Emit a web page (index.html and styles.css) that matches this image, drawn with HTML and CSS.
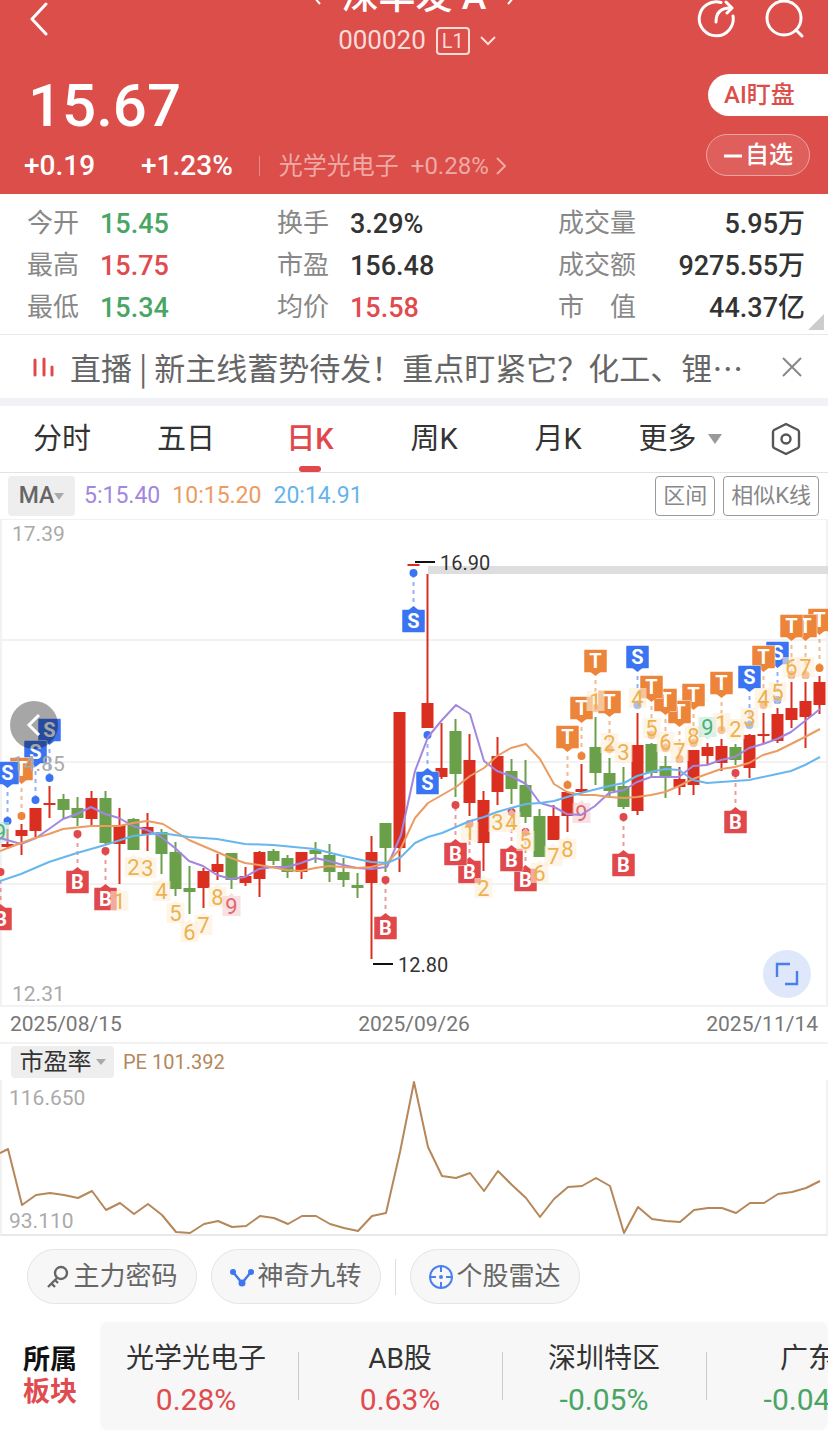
FILE: index.html
```html
<!DOCTYPE html>
<html lang="zh-CN">
<head>
<meta charset="utf-8">
<meta name="viewport" content="width=device-width, initial-scale=1">
<title>深华发A 000020</title>
<link rel="stylesheet" href="styles.css">
</head>
<body>
<header class="header">
  <div class="topbar">
    <button class="icon-btn back" aria-label="返回">
      <svg width="20" height="34" viewBox="0 0 20 34"><path d="M17 2 3 17l14 15" fill="none" stroke="#fff" stroke-width="3" stroke-linecap="round" stroke-linejoin="round"/></svg>
    </button>
    <div class="stock">
      <div class="stock-name">
        <svg width="10" height="18" viewBox="0 0 10 18"><path d="M8 2 2 9l6 7" fill="none" stroke="#fff" stroke-width="2"/></svg>
        <h1>深华发 A</h1>
        <svg width="10" height="18" viewBox="0 0 10 18"><path d="m2 2 6 7-6 7" fill="none" stroke="#fff" stroke-width="2"/></svg>
      </div>
      <button class="stock-code">000020 <span class="level">L1</span>
        <svg width="16" height="10" viewBox="0 0 16 10"><path d="m1 1 7 7 7-7" fill="none" stroke="#fbdcd9" stroke-width="2"/></svg>
      </button>
    </div>
    <div class="tools">
      <button class="icon-btn" aria-label="分享">
        <svg width="42" height="42" viewBox="0 0 42 42" fill="none" stroke="#fff" stroke-width="3" stroke-linecap="round" stroke-linejoin="round"><path d="M25 4.500A17 17 0 1 0 37 18"/><path d="M20 24c0-9 4-14 14-14"/><path d="m30 4 6 6-5 5"/></svg>
      </button>
      <button class="icon-btn" aria-label="搜索">
        <svg width="42" height="42" viewBox="0 0 42 42" fill="none" stroke="#fff" stroke-width="3" stroke-linecap="round"><circle cx="20" cy="20" r="17"/><path d="m32 32 6 6"/></svg>
      </button>
    </div>
  </div>
  <div class="summary">
    <div class="summary-main">
      <div class="price">15.67</div>
      <div class="changes">
        <span class="change-abs">+0.19</span>
        <span class="change-pct">+1.23%</span>
        <a class="industry" href="#">光学光电子 <span class="industry-pct">+0.28%</span>
          <svg width="12" height="20" viewBox="0 0 12 20"><path d="m2 2 8 8-8 8" fill="none" stroke="#efaaa6" stroke-width="2"/></svg>
        </a>
      </div>
    </div>
    <div class="summary-actions">
      <button class="watch">AI盯盘</button>
      <button class="favorite"><svg width="20" height="20" viewBox="0 0 20 20"><path d="M1 11h18" stroke="#fff" stroke-width="3"/></svg>自选</button>
    </div>
  </div>
</header>

<main>
  <section class="quotes" aria-label="行情">
    <div class="quote"><span class="label">今开</span><span class="value down">15.45</span></div>
    <div class="quote"><span class="label">换手</span><span class="value">3.29%</span></div>
    <div class="quote wide"><span class="label">成交量</span><span class="value">5.95万</span></div>
    <div class="quote"><span class="label">最高</span><span class="value up">15.75</span></div>
    <div class="quote"><span class="label">市盈</span><span class="value">156.48</span></div>
    <div class="quote wide"><span class="label">成交额</span><span class="value">9275.55万</span></div>
    <div class="quote"><span class="label">最低</span><span class="value down">15.34</span></div>
    <div class="quote"><span class="label">均价</span><span class="value up">15.58</span></div>
    <div class="quote wide"><span class="label">市　值</span><span class="value">44.37亿</span></div>
    <span class="corner"></span>
  </section>

  <section class="news">
    <svg class="news-icon" width="22" height="20" viewBox="0 0 22 20" stroke="#e0484c" stroke-width="3" stroke-linecap="round"><path d="M3 3v15M12 2v16M20 10v8"/></svg>
    <a class="news-text" href="#">直播 | 新主线蓄势待发！重点盯紧它？化工、锂电池</a>
    <button class="icon-btn" aria-label="关闭">
      <svg width="20" height="20" viewBox="0 0 20 20"><path d="m1 1 18 18M19 1 1 19" stroke="#888" stroke-width="2"/></svg>
    </button>
  </section>

  <nav class="tabs">
    <button class="tab">分时</button>
    <button class="tab">五日</button>
    <button class="tab active">日K</button>
    <button class="tab">周K</button>
    <button class="tab">月K</button>
    <button class="tab more">更多<svg width="14" height="10" viewBox="0 0 14 10"><path d="M0 0h14L7 10z" fill="#999"/></svg></button>
    <button class="tab" aria-label="设置">
      <svg width="32" height="34" viewBox="0 0 32 34" fill="none" stroke="#555" stroke-width="2.400" stroke-linejoin="round"><path d="M16 2 28 8q1 1 1 2v14q0 1-1 2L16 32 4 26q-1-1-1-2V10q0-1 1-2z"/><circle cx="16" cy="17" r="4.500"/></svg>
    </button>
  </nav>

  <div class="ma-bar">
    <button class="select-chip ma-chip">MA<svg width="10" height="7" viewBox="0 0 10 7"><path d="M0 0h10L5 7z" fill="#aaa"/></svg></button>
    <span class="ma5">5:15.40</span>
    <span class="ma10">10:15.20</span>
    <span class="ma20">20:14.91</span>
    <div class="ma-actions">
      <button class="outline-btn">区间</button>
      <button class="outline-btn">相似K线</button>
    </div>
  </div>

  <section class="chart">
    <svg id="kline" class="plot" viewBox="0 519 828 488" role="img" aria-label="日K线图"></svg>
    <button class="round prev" aria-label="向前">
      <svg width="16" height="24" viewBox="0 0 16 24"><path d="M13 2 3 12l10 10" fill="none" stroke="#fff" stroke-width="3"/></svg>
    </button>
    <button class="round expand" aria-label="全屏">
      <svg width="24" height="24" viewBox="0 0 24 24"><path d="M2 15V2h13M22 9v13H10" fill="none" stroke="#4a7ee8" stroke-width="2.400"/></svg>
    </button>
  </section>
  <div class="dates"><span>2025/08/15</span><span>2025/09/26</span><span>2025/11/14</span></div>

  <section class="pe">
    <div class="pe-head">
      <button class="select-chip pe-chip">市盈率<svg width="10" height="6" viewBox="0 0 10 6"><path d="M0 0h10L5 6z" fill="#aaa"/></svg></button>
      <span class="pe-value">PE 101.392</span>
    </div>
    <svg id="peline" class="plot" viewBox="0 1080 828 156" role="img" aria-label="市盈率走势"></svg>
  </section>

  <div class="shortcuts">
    <button class="pill">
      <svg width="24" height="26" viewBox="0 0 24 26" fill="none" stroke="#666" stroke-width="2.400"><circle cx="15" cy="9" r="6"/><path d="M11 14 2 23M5 19l4 4M9 16l3 3"/></svg>主力密码</button>
    <button class="pill">
      <svg width="24" height="26" viewBox="0 0 24 26"><path d="m3 8 9 11 9-11" fill="none" stroke="#3f76f0" stroke-width="2.400"/><g fill="#3f76f0"><circle cx="3" cy="8" r="3"/><circle cx="21" cy="8" r="3"/><circle cx="12" cy="19" r="3.500"/></g></svg>神奇九转</button>
    <span class="pill-divider"></span>
    <button class="pill">
      <svg width="24" height="26" viewBox="0 0 24 26" fill="none" stroke="#4a80ee" stroke-width="2"><circle cx="12" cy="13" r="11"/><path d="M12 2v6M12 18v6M1 13h6M17 13h6"/><circle cx="12" cy="13" r="2" fill="#4a80ee" stroke="none"/></svg>个股雷达</button>
  </div>

  <section class="sectors">
    <h2 class="sectors-title">所属<span class="up">板块</span></h2>
    <div class="sector-list">
      <a class="sector" href="#">光学光电子<span class="up">0.28%</span></a>
      <a class="sector" href="#">AB股<span class="up">0.63%</span></a>
      <a class="sector" href="#">深圳特区<span class="down">-0.05%</span></a>
      <a class="sector" href="#">广东<span class="down">-0.04%</span></a>
    </div>
  </section>
</main>
<script src="chart.js"></script>
</body>
</html>
```

FILE: styles.css
```css
* { box-sizing: border-box; }

body {
  margin: 0;
  background: #fff;
  color: #333;
  font-family: Roboto, "Noto Sans CJK SC", sans-serif;
  line-height: 1.2;
  overflow-x: hidden;
}

button {
  margin: 0;
  padding: 0;
  border: 0;
  background: none;
  color: inherit;
  font: inherit;
}

a { color: inherit; text-decoration: none; }
svg { display: block; flex: none; }

.up { color: #df4b4e; }
.down { color: #48a564; }

/* Header */
.header {
  background: #db4e49;
  color: #fff;
  overflow: hidden;
}
.topbar {
  display: grid;
  grid-template-columns: 1fr auto 1fr;
  height: 62px;
}
.icon-btn { display: flex; align-items: center; }
.back { height: 38px; padding-left: 29px; justify-self: start; }
.stock {
  display: flex;
  flex-direction: column;
  align-items: center;
  margin-top: -28px;
}
.stock-name { display: flex; align-items: center; gap: 20px; height: 50px; }
.stock-name h1 {
  margin: 0;
  font-size: 37px;
  font-weight: 500;
  line-height: 50px;
  white-space: nowrap;
}
.stock-code {
  display: flex;
  align-items: center;
  gap: 10px;
  height: 38px;
  padding-left: 6px;
  font-size: 26px;
  color: #fbdcd9;
}
.level {
  height: 28px;
  padding: 0 4px;
  border: 2px solid #fbdcd9;
  border-radius: 4px;
  font-size: 20px;
  line-height: 24px;
}
.tools {
  display: flex;
  justify-content: flex-end;
  gap: 26px;
  height: 38px;
  padding-right: 22px;
}
.summary { display: flex; justify-content: space-between; height: 132px; }
.price {
  padding-left: 28px;
  font-size: 60px;
  font-weight: 500;
  line-height: 88px;
}
.changes {
  display: flex;
  align-items: center;
  height: 32px;
  padding-left: 24px;
  font-size: 28px;
  font-weight: 500;
}
.change-pct { margin-left: 46px; }
.industry {
  display: flex;
  align-items: center;
  margin-left: 26px;
  padding-left: 19px;
  border-left: 1px solid #e88a86;
  height: 20px;
  color: #efaaa6;
  font-size: 24px;
  font-weight: 400;
  white-space: nowrap;
}
.industry-pct { margin: 0 6px 0 12px; }
.summary-actions {
  display: flex;
  flex-direction: column;
  align-items: flex-end;
  gap: 18px;
  padding-top: 12px;
}
.watch {
  width: 120px;
  height: 42px;
  padding-left: 16px;
  border-radius: 21px 0 0 21px;
  background: #fff;
  color: #db4e49;
  font-size: 24px;
  font-weight: 500;
  text-align: left;
}
.favorite {
  display: flex;
  align-items: center;
  justify-content: center;
  gap: 2px;
  width: 104px;
  height: 42px;
  margin-right: 18px;
  border: 1px solid #eda5a2;
  border-radius: 21px;
  background: #de5f5b;
  font-size: 24px;
  font-weight: 500;
}

/* Quote table */
.quotes {
  position: relative;
  display: grid;
  grid-template-columns: 250fr 281fr 247fr;
  padding: 9px 23px 5px 27px;
  border-bottom: 1px solid #e8e8e8;
}
.quote {
  display: flex;
  align-items: center;
  height: 42px;
  font-size: 26px;
  white-space: nowrap;
}
.quote .label { width: 73px; color: #888; }
.quote .value { font-size: 27px; font-weight: 500; }
.wide { justify-content: space-between; }
.wide .label { width: auto; }
.corner {
  position: absolute;
  right: 4px;
  bottom: 4px;
  width: 16px;
  height: 16px;
  background: #ccc;
  clip-path: polygon(100% 0, 100% 100%, 0 100%);
}

/* News strip */
.news {
  display: flex;
  align-items: center;
  height: 71px;
  padding: 0 26px 0 32px;
  border-bottom: 8px solid #f1f2f7;
}
.news-text {
  flex: 1;
  min-width: 0;
  margin: 0 36px 0 16px;
  overflow: hidden;
  color: #666;
  font-family: "Noto Sans CJK SC", sans-serif;
  font-size: 31px;
  line-height: 44px;
  text-overflow: ellipsis;
  white-space: nowrap;
}

/* Period tabs */
.tabs {
  display: grid;
  grid-template-columns: repeat(5, 124fr) 124fr 84fr;
  height: 67px;
  border-bottom: 1px solid #e2e2e2;
}
.tab {
  position: relative;
  display: flex;
  align-items: center;
  justify-content: center;
  font-size: 29px;
}
.more { gap: 11px; padding-right: 4px; }
.active { color: #e0484c; font-weight: 500; }
.active::after {
  content: "";
  position: absolute;
  bottom: 0;
  width: 22px;
  height: 6px;
  border-radius: 3px;
  background: #e0484c;
}

/* Moving-average bar */
.ma-bar {
  display: flex;
  align-items: center;
  height: 46px;
  padding: 0 9px 0 8px;
  font-size: 23px;
  white-space: nowrap;
}
.select-chip {
  display: flex;
  align-items: center;
  justify-content: center;
  border-radius: 4px;
  background: #eee;
}
.ma-chip { width: 67px; height: 40px; color: #666; font-weight: 500; }
.ma5 { margin-left: 9px; color: #a286e0; }
.ma10 { margin-left: 12px; color: #eb9c63; }
.ma20 { margin-left: 12px; color: #67b4ea; }
.ma-actions { display: flex; gap: 8px; margin-left: auto; }
.outline-btn {
  height: 40px;
  padding: 0 7px;
  border: 1px solid #999;
  border-radius: 4px;
  color: #888;
  font-size: 22px;
}

/* Charts */
.chart { position: relative; }
.plot { width: 100%; height: auto; overflow: hidden; }
.round {
  position: absolute;
  display: flex;
  align-items: center;
  justify-content: center;
  width: 48px;
  height: 48px;
  border-radius: 50%;
}
.prev { left: 10px; top: 182px; background: rgba(0, 0, 0, .35); }
.expand { right: 17px; bottom: 9px; background: #dfe8fb; }
.axis { fill: #aaa; font-size: 21px; }
.note { fill: #333; font-size: 20px; }
.flag-text { fill: #fff; font-size: 20px; font-weight: 700; text-anchor: middle; }
.count-text { font-size: 22px; text-anchor: middle; }
.dates {
  display: flex;
  align-items: center;
  justify-content: space-between;
  height: 35px;
  padding: 0 10px;
  color: #777;
  font-size: 21px;
}
.pe { border-top: 2px solid #f2f2f2; }
.pe-head { display: flex; align-items: center; height: 36px; padding-left: 11px; }
.pe-chip { gap: 4px; width: 103px; height: 32px; font-size: 24px; }
.pe-value { margin-left: 9px; color: #b5875a; font-size: 20px; }

/* Shortcuts */
.shortcuts {
  display: flex;
  align-items: center;
  gap: 14px;
  padding: 13px 27px 18px;
}
.pill {
  display: flex;
  align-items: center;
  justify-content: center;
  gap: 3px;
  width: 170px;
  height: 55px;
  border: 1px solid #e4e4e4;
  border-radius: 28px;
  background: #f7f7f7;
  color: #666;
  font-size: 26px;
  white-space: nowrap;
}
.pill-divider { width: 1px; height: 36px; background: #ddd; }

/* Sectors */
.sectors { display: flex; align-items: center; padding-bottom: 13px; }
.sectors-title {
  display: flex;
  flex: 0 0 100px;
  flex-direction: column;
  margin: 0;
  padding-left: 23px;
  color: #111;
  font-size: 27px;
  font-weight: 700;
  line-height: 32px;
}
.sector-list {
  display: flex;
  flex: 1;
  min-width: 0;
  height: 108px;
  overflow: hidden;
  border-radius: 8px;
  background: #f7f7f7;
}
.sector {
  position: relative;
  display: flex;
  flex: 0 0 204px;
  flex-direction: column;
  align-items: center;
  padding-top: 16px;
  font-size: 28px;
  line-height: 41px;
}
.sector span { font-size: 30px; }
.sector:first-child { flex-basis: 198px; padding-right: 6px; }
.sector + .sector::before {
  content: "";
  position: absolute;
  left: 0;
  top: 30px;
  width: 1px;
  height: 48px;
  background: #ccc;
}
```

FILE: chart.js
```js
const NS = 'http://www.w3.org/2000/svg';
const RED = '#d92e20';
const GREEN = '#6ba04b';

function add(parent, tag, attrs, text) {
  const el = document.createElementNS(NS, tag);
  for (const key in attrs) el.setAttribute(key, attrs[key]);
  if (text !== undefined) el.textContent = text;
  parent.appendChild(el);
  return el;
}

function line(parent, points, color) {
  add(parent, 'polyline', {
    points, fill: 'none', stroke: color, 'stroke-width': 2, 'stroke-linejoin': 'round'
  });
}

// Each candle: direction, wick top, wick bottom, body top, body bottom.
const candles = [
  'r 829 849 844 847', 'r 824 855 830 836', 'r 808 837 808 831', 'r 786 818 803 805',
  'g 794 819 799 810', 'g 797 826 808 818', 'r 791 825 798 819', 'g 791 844 798 843',
  'r 808 884 825 844', 'g 818 850 819 850', 'r 813 851 827 834', 'g 829 874 832 854',
  'g 842 896 852 889', 'g 866 914 888 892', 'r 868 908 871 888', 'r 854 880 864 872',
  'g 853 889 853 880', 'r 867 886 876 883', 'r 851 897 852 879', 'g 849 865 851 861',
  'g 855 878 858 872', 'r 852 879 852 872', 'g 842 863 850 854', 'g 844 882 855 872',
  'g 858 887 872 880', 'g 873 898 885 888', 'r 836 959 852 883', 'g 823 872 823 848',
  'r 712 872 712 848', 'r 564 566 564 566', 'r 574 728 703 728', 'r 723 779 768 777',
  'g 719 797 731 774', 'r 734 816 760 803', 'r 791 871 800 843', 'r 737 805 756 792',
  'g 759 804 771 789', 'g 760 823 785 817', 'g 809 857 816 857', 'r 805 840 816 840',
  'r 792 832 792 816', 'r 764 793 789 792', 'g 717 785 747 773', 'g 758 797 773 791',
  'g 767 809 786 807', 'r 713 815 745 811', 'g 743 776 744 773', 'g 756 798 766 778',
  'r 767 795 779 787', 'r 750 795 750 785', 'r 743 765 747 756', 'r 739 771 746 763',
  'g 744 765 747 760', 'r 734 778 735 768', 'r 713 744 734 736', 'r 708 743 714 741',
  'r 682 728 708 720', 'r 682 748 701 717', 'r 676 714 682 705'
];

const ma5 = '0,838 21,844 36,838 49,829 63,819 77,814 91,807 105,814 119,818 133,826 147,830 161,837 175,848 189,861 203,866 217,875 231,879 245,877 259,869 273,867 287,867 301,863 315,858 329,861 343,865 357,868 371,869 387,867 401,835 415,771 428,737 442,720 456,705 470,714 484,761 497,771 511,776 526,784 540,803 554,807 567,814 581,815 595,806 609,793 624,790 637,782 651,777 665,777 679,777 693,766 707,765 721,760 735,757 749,748 763,744 777,739 791,732 805,721 820,709';
const ma10 = '0,851 21,843 35,838 49,834 63,829 91,826 119,826 133,823 147,821 163,824 189,840 217,852 231,858 245,863 259,865 287,870 301,871 315,868 329,866 357,868 371,867 387,863 401,848 415,818 428,803 442,795 456,787 470,776 484,768 497,756 511,748 526,744 540,759 554,784 567,792 581,795 595,795 609,797 624,798 637,797 651,795 665,792 679,786 693,779 721,769 735,767 749,763 763,755 777,751 791,744 805,737 820,729';
const ma20 = '0,881 21,874 35,868 49,862 77,853 105,845 133,836 161,833 189,837 217,839 245,844 273,845 315,849 343,856 371,862 387,863 401,857 415,843 428,837 442,833 456,827 470,821 484,817 497,812 511,808 526,804 540,803 554,801 567,797 581,793 609,786 624,783 637,776 651,772 665,769 679,770 693,780 707,783 735,781 749,780 777,774 791,771 805,765 820,757';

// Each flag: letter, center x, box top, dot y.
const flags = [
  ['B', 0.5, 908, 872], ['S', 7.5, 762, 821], ['T', 21.5, 758, 816], ['S', 35.5, 741, 800],
  ['S', 49.5, 719, 778], ['B', 77.5, 871, 834], ['B', 105.5, 888, 851], ['B', 385.5, 917, 880],
  ['S', 413.5, 610, 573], ['S', 427.5, 772, 735], ['B', 455.5, 843, 805], ['B', 469.5, 861, 824],
  ['B', 511.5, 849, 812], ['B', 525.5, 869, 832], ['T', 567.5, 726, 785], ['T', 581.5, 697, 756],
  ['T', 595.5, 650, 708], ['T', 609.5, 691, 749], ['B', 623.5, 854, 817], ['S', 637.5, 646, 705],
  ['T', 651.5, 676, 735], ['T', 665.5, 689, 748], ['T', 679.5, 701, 759], ['T', 693.5, 684, 743],
  ['T', 721.5, 672, 730], ['B', 735.5, 811, 773], ['S', 749.5, 666, 725], ['T', 763.5, 646, 705],
  ['S', 777.5, 642, 700], ['T', 791.5, 615, 675], ['T', 805.5, 615, 675], ['T', 819.5, 609, 668]
];
const flagColors = { B: '#e0484c', S: '#3b74f2', T: '#ec8439' };

// Each count: digit, center x, center y, side of the candle it points to, optional tint.
const counts = [
  [9, 0, 832, 'd', 'green'], [1, 119.5, 901, 'u'], [2, 133.5, 867, 'u'], [3, 147.5, 868, 'u'],
  [4, 161.5, 891, 'u'], [5, 175.5, 913, 'u'], [6, 189.5, 932, 'u'], [7, 203.5, 925, 'u'],
  [8, 217.5, 897, 'u'], [9, 231.5, 906, 'u', 'pink'], [1, 469.5, 832, 'u'], [2, 483.5, 888, 'u'],
  [3, 497.5, 822, 'u'], [4, 511.5, 822, 'u'], [5, 525.5, 841, 'u'], [6, 539.5, 873, 'u'],
  [7, 553.5, 856, 'u'], [8, 567.5, 849, 'u'], [9, 581.5, 813, 'u', 'pink'], [1, 595.5, 701, 'd'],
  [2, 609.5, 743, 'd'], [3, 623.5, 752, 'd'], [4, 637.5, 698, 'd'], [5, 651.5, 728, 'd'],
  [6, 665.5, 742, 'd'], [7, 679.5, 751, 'd'], [8, 693.5, 736, 'd'], [9, 707.5, 727, 'd', 'green'],
  [1, 721.5, 723, 'd'], [2, 735.5, 729, 'd'], [3, 749.5, 718, 'd'], [4, 763.5, 698, 'd'],
  [5, 777.5, 692, 'd'], [6, 791.5, 667, 'd'], [7, 805.5, 667, 'd']
];
const tints = {
  plain: ['#fdeeda', '#edb14e'],
  pink: ['#f4cdd0', '#e0686c'],
  green: ['#bfe8d6', '#4caf7c']
};

const k = document.getElementById('kline');
for (const y of [519, 640, 762, 884, 1006]) {
  add(k, 'path', { d: `M0 ${y}H828`, stroke: '#f2f2f2', 'stroke-width': 2 });
}
add(k, 'path', { d: 'M1 519V1006M827 519V1006', stroke: '#f2f2f2', 'stroke-width': 2 });
add(k, 'rect', { x: 428, y: 566, width: 400, height: 8, fill: '#dedede' });

candles.forEach((row, i) => {
  const [dir, high, low, top, bottom] = row.split(' ');
  const x = 7.5 + 14 * i;
  const color = dir === 'r' ? RED : GREEN;
  add(k, 'path', { d: `M${x} ${high}V${low}`, stroke: color, 'stroke-width': 2 });
  add(k, 'rect', {
    x: x - 6, y: top, width: 12, height: Math.max(2, bottom - top), fill: color
  });
});

for (const [letter, x, top, dot] of flags.slice().reverse()) {
  const color = flagColors[letter];
  const below = dot < top;
  const edge = below ? top : top + 22;
  const tip = below ? top - 4 : top + 26;
  const g = add(k, 'g', {});
  add(g, 'path', {
    d: `M${x} ${tip}V${dot}`, stroke: color, 'stroke-width': 2,
    'stroke-dasharray': '4 4', 'stroke-dashoffset': 4, opacity: 0.55
  });
  add(g, 'circle', { cx: x, cy: dot, r: 4, fill: color });
  add(g, 'rect', { x: x - 11.5, y: top - 0.5, width: 23, height: 23, rx: 1, fill: color, stroke: '#fff', 'stroke-opacity': 0.5 });
  add(g, 'path', { d: `M${x - 5} ${edge}H${x + 5}L${x} ${tip}z`, fill: color });
  add(g, 'text', { x, y: top + 18, class: 'flag-text' }, letter);
}

for (const [digit, x, y, side, tint] of counts) {
  const [fill, ink] = tints[tint || 'plain'];
  const d = side === 'u'
    ? `M${x - 9} ${y - 10}h6l3-3 3 3h6v20h-18z`
    : `M${x - 9} ${y - 10}h18v20h-6l-3 3-3-3h-6z`;
  add(k, 'path', { d, fill, opacity: 0.6 });
  add(k, 'text', { x, y: y + 8, class: 'count-text', fill: ink }, digit);
}

line(k, ma5, '#a286e0');
line(k, ma10, '#eb9c63');
line(k, ma20, '#67b7ee');

add(k, 'path', { d: 'M415 562H435M373 964H393', stroke: '#111', 'stroke-width': 2 });
add(k, 'text', { x: 440, y: 570, class: 'note' }, '16.90');
add(k, 'text', { x: 398, y: 972, class: 'note' }, '12.80');
add(k, 'text', { x: 12, y: 541, class: 'axis' }, '17.39');
add(k, 'text', { x: 12, y: 771, class: 'axis' }, '14.85');
add(k, 'text', { x: 12, y: 1001, class: 'axis' }, '12.31');

const pe = document.getElementById('peline');
add(pe, 'path', { d: 'M0 1235H828', stroke: '#e8e8e8', 'stroke-width': 2 });
add(pe, 'path', { d: 'M1 1080V1235M827 1080V1235', stroke: '#f2f2f2', 'stroke-width': 2 });
add(pe, 'text', { x: 9, y: 1105, class: 'axis' }, '116.650');
add(pe, 'text', { x: 9, y: 1228, class: 'axis' }, '93.110');
line(pe, '0,1153 8,1149 22,1205 36,1195 50,1193 64,1195 78,1198 92,1191 106,1210 120,1203 134,1214 148,1204 162,1215 176,1232 190,1233 204,1224 218,1221 232,1227 246,1226 260,1216 274,1218 288,1224 302,1216 316,1216 330,1224 344,1228 358,1231 372,1216 386,1213 400,1152 414,1082 428,1147 442,1176 456,1178 470,1173 484,1191 498,1171 512,1185 526,1198 540,1217 554,1199 568,1187 582,1186 596,1178 610,1186 624,1233 638,1207 652,1219 666,1221 680,1222 694,1210 708,1208 722,1208 736,1213 750,1203 764,1203 778,1194 792,1192 806,1188 820,1181', '#b5875a');
```
